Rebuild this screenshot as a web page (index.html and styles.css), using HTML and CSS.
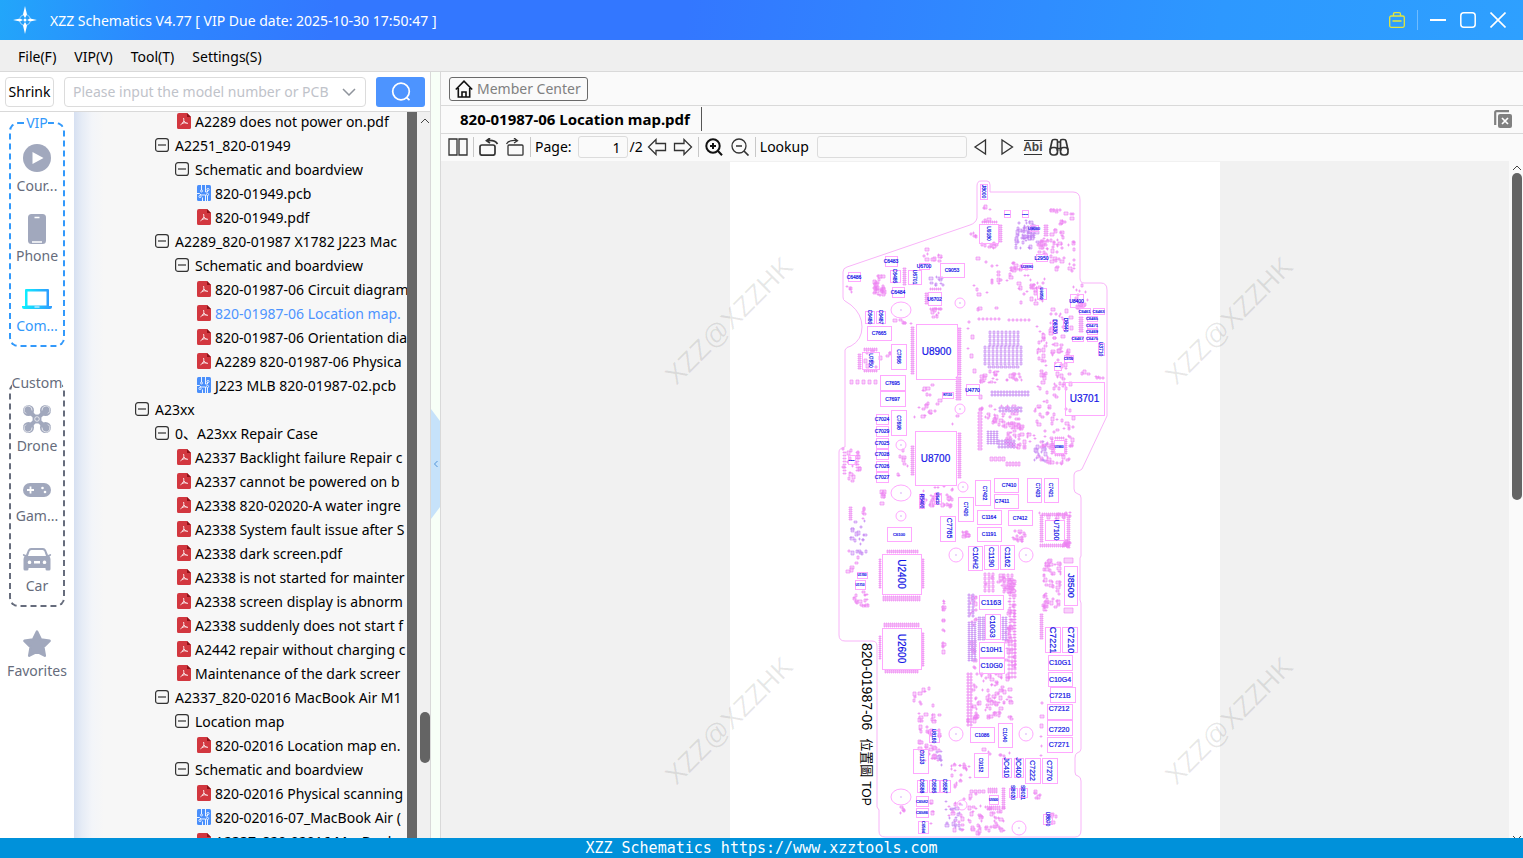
FILE: index.html
```html
<!DOCTYPE html>
<html lang="en">
<head>
    <meta charset="UTF-8">
    <meta name="viewport" content="width=device-width, initial-scale=1.0">
    <title>XZZ Schematics</title>
    <link rel="stylesheet" href="styles.css">
</head>
<body>

    <!-- Shared icons -->
    <svg class="defs" width="0" height="0">
        <symbol id="pdf" viewBox="0 0 14 16">
            <path d="M2 0h8l4 4v10.500a1.500 1.500 0 0 1-1.500 1.500h-11A1.500 1.500 0 0 1 0 14.500V2a2 2 0 0 1 2-2z" fill="#d2373f"/>
            <path d="M10 0l4 4h-4z" fill="#8e1218"/>
            <path d="M6.500 5c.8 2.500.2 4.500-3 6.800M7 8c.8 1.600 2 2.400 4 2.300M5 10.500c1.500-.7 3-.9 4.500-.6" fill="none" stroke="#fff" stroke-width=".9"/>
        </symbol>
        <symbol id="pcb" viewBox="0 0 14 16">
            <rect width="14" height="16" rx="1.500" fill="#4a8ffb"/>
            <path d="M4.500 0v5M8.500 0v7h2V5M0 8.500h2.500L4 10h4.500v6M5.500 16v-3.500M10.500 10v6" fill="none" stroke="#fff" stroke-width=".9"/>
            <g fill="#4a8ffb" stroke="#fff" stroke-width=".8"><circle cx="11" cy="4.500" r="1.100"/><circle cx="3" cy="11.500" r="1.100"/><circle cx="10.500" cy="9.500" r="1.100"/><circle cx="4.500" cy="6" r="1"/></g>
        </symbol>
        <symbol id="minus" viewBox="0 0 14 14">
            <rect x=".6" y=".6" width="12.800" height="12.800" rx="2.500" fill="none" stroke="#333" stroke-width="1.200"/>
            <path d="M3 7h8" stroke="#333" stroke-width="1.200"/>
        </symbol>
        <symbol id="up" viewBox="0 0 10 6"><path d="M1 5l4-4 4 4" fill="none" stroke="#444"/></symbol>
        <symbol id="down" viewBox="0 0 10 6"><path d="M1 1l4 4 4-4" fill="none" stroke="#444"/></symbol>
    </svg>

    <header class="titlebar">
        <svg class="logo" viewBox="0 0 26 30" width="26" height="30" fill="#fff">
            <path d="M13 1l2 8.500-2 3.500-2-3.500zM13 29l2-8.500-2-3.500-2 3.500zM1 15l7-1.500 3 1.500-3 1.500zM25 15l-7-1.500-3 1.500 3 1.500z"/>
            <circle cx="13" cy="15" r="1.500"/>
            <circle cx="13" cy="15" r="5.500" fill="none" stroke="#fff" stroke-opacity=".6" stroke-dasharray="5 3.600" stroke-dashoffset="-1.800"/>
        </svg>
        <h1>XZZ Schematics V4.77 [ VIP Due date: 2025-10-30 17:50:47 ]</h1>
        <div class="window-btns">
            <button aria-label="Toolbox">
                <svg viewBox="0 0 16 16" width="16" height="16" fill="none" stroke="#e3e63c" stroke-width="1.300"><rect x=".7" y="4" width="14.600" height="11.300" rx="1.500"/><path d="M4.500 4V2q0-1.300 1.300-1.300h4.400q1.300 0 1.300 1.300v2M3.500 9h9"/></svg>
            </button>
            <span class="divider"></span>
            <button aria-label="Minimize">
                <svg viewBox="0 0 16 16" width="16" height="16" stroke="#fff" stroke-width="2"><path d="M0 8h16"/></svg>
            </button>
            <button aria-label="Maximize">
                <svg viewBox="0 0 16 16" width="16" height="16" fill="none" stroke="#fff" stroke-width="1.500"><rect x=".8" y=".8" width="14.400" height="14.400" rx="3"/></svg>
            </button>
            <button aria-label="Close">
                <svg viewBox="0 0 16 16" width="16" height="16" stroke="#fff" stroke-width="1.600"><path d="M.5.5l15 15M15.500.5l-15 15"/></svg>
            </button>
        </div>
    </header>

    <nav class="menubar">
        <button>File(F)</button>
        <button>VIP(V)</button>
        <button>Tool(T)</button>
        <button>Settings(S)</button>
    </nav>

    <main class="main">
        <section class="left">
            <div class="search">
                <button class="shrink">Shrink</button>
                <div class="combo">
                    <input type="text" aria-label="Model number or PCB" placeholder="Please input the model number or PCB">
                    <button aria-label="History"><svg viewBox="0 0 14 8" width="14" height="8" fill="none" stroke="#8f949c" stroke-width="1.500"><path d="M1 1l6 6 6-6"/></svg></button>
                </div>
                <button class="go" aria-label="Search">
                    <svg viewBox="0 0 20 20" width="20" height="20" fill="none" stroke="#fff" stroke-width="1.700"><circle cx="10" cy="9.500" r="8.300"/><path d="M15.500 15.500l3 2.700"/></svg>
                </button>
            </div>

            <div class="browse">
                <aside class="side">
                    <fieldset class="group vip">
                        <legend>VIP</legend>
                        <button class="cat">
                            <svg viewBox="0 0 30 30"><circle cx="15" cy="15" r="14" fill="#a1a8bd"/><path d="M10.500 9v12l11-6z" fill="#fff"/></svg>
                            <span>Cour...</span>
                        </button>
                        <button class="cat">
                            <svg viewBox="0 0 30 30"><rect x="6" y="1" width="18" height="30" rx="3.500" fill="#a1a8bd"/><path d="M12.500 4.500h5M10 29h10" stroke="#fff" stroke-width="1.300"/></svg>
                            <span>Phone</span>
                        </button>
                        <button class="cat active">
                            <svg viewBox="0 0 30 30">
                                <defs><linearGradient id="lap"><stop stop-color="#0df0ff"/><stop offset="1" stop-color="#2f9bff"/></linearGradient></defs>
                                <path fill="url(#lap)" fill-rule="evenodd" d="M4 6h22q1 0 1 1v17H3V7q0-1 1-1zM5.500 8.500v14h19v-14z"/>
                                <path fill="url(#lap)" d="M0 23h30v1q0 2-2 2H2q-2 0-2-2z"/><path d="M12.500 24h5" stroke="#fff"/>
                            </svg>
                            <span>Com...</span>
                        </button>
                    </fieldset>

                    <fieldset class="group custom">
                        <legend>Custom</legend>
                        <button class="cat">
                            <svg viewBox="0 0 30 30">
                                <path d="M6.500 7.500l17 17M23.500 7.500l-17 17" stroke="#a1a8bd" stroke-width="4"/>
                                <g fill="#a1a8bd"><circle cx="6.500" cy="7.500" r="5.500"/><circle cx="23.500" cy="7.500" r="5.500"/><circle cx="6.500" cy="24.500" r="5.500"/><circle cx="23.500" cy="24.500" r="5.500"/><circle cx="15" cy="16" r="4.500"/></g>
                                <g fill="none" stroke="#fff" stroke-width=".7"><path d="M4 10.500a4 4 0 1 1 6-3M26 10.500a4 4 0 1 0-6-3M4 21.500a4 4 0 1 0 6 3M26 21.500a4 4 0 1 1-6 3"/><circle cx="15" cy="16" r="2.300"/></g>
                            </svg>
                            <span>Drone</span>
                        </button>
                        <button class="cat">
                            <svg viewBox="0 0 30 30"><rect x="1" y="10" width="28" height="14" rx="7" fill="#a1a8bd"/><path d="M5 17h7M8.500 13.500v7" stroke="#fff" stroke-width="1.800"/><circle cx="20.500" cy="15" r="1.300" fill="#fff"/><circle cx="23" cy="19" r="1.300" fill="#fff"/></svg>
                            <span>Gam...</span>
                        </button>
                        <button class="cat">
                            <svg viewBox="0 0 30 30"><path fill="#a1a8bd" fill-rule="evenodd" d="M9 5h12q2 0 3 2l2 5 2.500-1q1 0 .5 1.500l-1.500 1q1 1 1 3V26q0 1.500-1.500 1.500h-2Q23.500 27.500 23.500 26v-1h-17v1q0 1.500-1.500 1.500H3Q1.500 27.500 1.500 26v-9.500q0-2 1-3L1 12.500Q.5 11 1.500 11L4 12l2-5q1-2 3-2zM9.500 7Q8 7 7.500 8.500L6 13h18l-1.500-4.500Q22 7 20.500 7zM7.500 17.500a1.800 1.800 0 1 0 .01 0zM22.500 17.500a1.800 1.800 0 1 0 .01 0zM12 18v2.500h6V18z"/></svg>
                            <span>Car</span>
                        </button>
                    </fieldset>

                    <button class="cat fav">
                        <svg viewBox="0 0 30 30"><path d="M15 3.500l3.900 8 8.700 1.300-6.300 6.200 1.500 8.700L15 23.600l-7.800 4.100L8.700 19l-6.300-6.200 8.700-1.300z" fill="#a1a8bd" stroke="#a1a8bd" stroke-width="2.500" stroke-linejoin="round"/></svg>
                        <span>Favorites</span>
                    </button>
                </aside>

                <ul class="tree">
                    <li class="lv2"><a href="#"><svg><use href="#pdf"/></svg>A2289 does not power on.pdf</a></li>
                    <li class="lv1"><button><svg><use href="#minus"/></svg>A2251_820-01949</button></li>
                    <li class="lv2"><button><svg><use href="#minus"/></svg>Schematic and boardview</button></li>
                    <li class="lv3"><a href="#"><svg><use href="#pcb"/></svg>820-01949.pcb</a></li>
                    <li class="lv3"><a href="#"><svg><use href="#pdf"/></svg>820-01949.pdf</a></li>
                    <li class="lv1"><button><svg><use href="#minus"/></svg>A2289_820-01987 X1782 J223 Mac</button></li>
                    <li class="lv2"><button><svg><use href="#minus"/></svg>Schematic and boardview</button></li>
                    <li class="lv3"><a href="#"><svg><use href="#pdf"/></svg>820-01987-06 Circuit diagram</a></li>
                    <li class="lv3"><a href="#" class="current"><svg><use href="#pdf"/></svg>820-01987-06 Location map.</a></li>
                    <li class="lv3"><a href="#"><svg><use href="#pdf"/></svg>820-01987-06 Orientation dia</a></li>
                    <li class="lv3"><a href="#"><svg><use href="#pdf"/></svg>A2289 820-01987-06 Physica</a></li>
                    <li class="lv3"><a href="#"><svg><use href="#pcb"/></svg>J223 MLB 820-01987-02.pcb</a></li>
                    <li class="lv0"><button><svg><use href="#minus"/></svg>A23xx</button></li>
                    <li class="lv1"><button><svg><use href="#minus"/></svg>0、A23xx Repair Case</button></li>
                    <li class="lv2"><a href="#"><svg><use href="#pdf"/></svg>A2337 Backlight failure Repair c</a></li>
                    <li class="lv2"><a href="#"><svg><use href="#pdf"/></svg>A2337 cannot be powered on b</a></li>
                    <li class="lv2"><a href="#"><svg><use href="#pdf"/></svg>A2338 820-02020-A water ingre</a></li>
                    <li class="lv2"><a href="#"><svg><use href="#pdf"/></svg>A2338 System fault issue after S</a></li>
                    <li class="lv2"><a href="#"><svg><use href="#pdf"/></svg>A2338 dark screen.pdf</a></li>
                    <li class="lv2"><a href="#"><svg><use href="#pdf"/></svg>A2338 is not started for mainter</a></li>
                    <li class="lv2"><a href="#"><svg><use href="#pdf"/></svg>A2338 screen display is abnorm</a></li>
                    <li class="lv2"><a href="#"><svg><use href="#pdf"/></svg>A2338 suddenly does not start f</a></li>
                    <li class="lv2"><a href="#"><svg><use href="#pdf"/></svg>A2442 repair without charging c</a></li>
                    <li class="lv2"><a href="#"><svg><use href="#pdf"/></svg>Maintenance of the dark screer</a></li>
                    <li class="lv1"><button><svg><use href="#minus"/></svg>A2337_820-02016 MacBook Air M1</button></li>
                    <li class="lv2"><button><svg><use href="#minus"/></svg>Location map</button></li>
                    <li class="lv3"><a href="#"><svg><use href="#pdf"/></svg>820-02016 Location map en.</a></li>
                    <li class="lv2"><button><svg><use href="#minus"/></svg>Schematic and boardview</button></li>
                    <li class="lv3"><a href="#"><svg><use href="#pdf"/></svg>820-02016 Physical scanning</a></li>
                    <li class="lv3"><a href="#"><svg><use href="#pcb"/></svg>820-02016-07_MacBook Air (</a></li>
                    <li class="lv3"><a href="#"><svg><use href="#pdf"/></svg>A2337_820-02016 MacBook</a></li>
                </ul>
                <div class="edge"></div>
                <div class="scroll tree-scroll">
                    <button aria-label="Scroll up"><svg><use href="#up"/></svg></button>
                    <div class="track"><div class="thumb"></div></div>
                </div>
            </div>
        </section>

        <div class="splitter">
            <button aria-label="Collapse"><svg viewBox="0 0 6 8" width="6" height="8" fill="none" stroke="#4f93d8"><path d="M4.500 1L1.500 4l3 3"/></svg></button>
        </div>

        <section class="right">
            <div class="member-row">
                <button class="member">
                    <svg viewBox="0 0 18 18" width="18" height="18" fill="none" stroke="#111" stroke-width="1.600"><path d="M.8 9.500L9 1.200l8.200 8.300M3.300 8v9h11.400V8M7 17v-5h4v5"/></svg>
                    Member Center
                </button>
            </div>
            <div class="tabs">
                <button class="tab">820-01987-06 Location map.pdf</button>
                <button class="close-all" aria-label="Close all tabs">
                    <svg viewBox="0 0 18 18" width="18" height="18"><path d="M1.200 15V2.500q0-1.300 1.300-1.300H15" fill="none" stroke="#808080" stroke-width="2.200"/><rect x="4" y="4" width="14" height="14" rx="2" fill="#808080"/><path d="M8 8l6 6M14 8l-6 6" stroke="#fff" stroke-width="1.700"/></svg>
                </button>
            </div>
            <div class="toolbar">
                <button aria-label="Two pages"><svg viewBox="0 0 20 18"><path d="M1 1h8v16H1zM11 1h8v16h-8z"/></svg></button>
                <span class="sep"></span>
                <button aria-label="Rotate left"><svg class="thick" viewBox="0 0 20 18"><rect x="1" y="7" width="15" height="10.200" rx="2"/><path d="M18.500 6Q16 1.500 8 2.500M11 0L7.500 2.700 11 5"/></svg></button>
                <button aria-label="Rotate right"><svg viewBox="0 0 20 18"><rect x="3" y="7" width="15" height="10.200" rx="1"/><path d="M1.500 6Q4 1.500 12 2.500M9 0l3.500 2.700L9 5"/></svg></button>
                <span class="sep"></span>
                <label for="page">Page:</label>
                <input type="text" id="page" class="page-no" value="1">
                <span class="total">/2</span>
                <button aria-label="Previous page"><svg viewBox="0 0 20 18"><path d="M1.500 9L9 1.500V5.500h9.500v7H9v4z"/></svg></button>
                <button aria-label="Next page"><svg viewBox="0 0 20 18"><path d="M18.500 9L11 1.500V5.500H1.500v7H11v4z"/></svg></button>
                <span class="sep"></span>
                <button aria-label="Zoom in"><svg class="bold" viewBox="0 0 20 18"><circle cx="9" cy="8" r="6.700"/><path d="M14 13l4 4.300M6 8h6M9 5v6"/></svg></button>
                <button aria-label="Zoom out"><svg viewBox="0 0 20 18"><circle cx="9" cy="8" r="7"/><path d="M14 13l4.500 4.500M6 8h6" stroke-width="1.700"/></svg></button>
                <span class="sep"></span>
                <label for="lookup">Lookup</label>
                <input type="text" id="lookup" class="lookup">
                <button aria-label="Find previous"><svg viewBox="0 0 20 18"><path d="M14.500 2v14L4 9z"/></svg></button>
                <button aria-label="Find next"><svg viewBox="0 0 20 18"><path d="M5 2v14l10.500-7z"/></svg></button>
                <button class="abi">Abi</button>
                <button aria-label="Search in document"><svg class="thick" viewBox="0 0 20 18"><rect x="1" y="9.500" width="7.500" height="7.500" rx="3"/><rect x="11.500" y="9.500" width="7.500" height="7.500" rx="3"/><path d="M1 12L3 3q.3-1.500 2-1.500h2q1.500 0 1.500 1.500v10M19 12L17 3q-.3-1.500-2-1.500h-2q-1.500 0-1.500 1.500v10M8.500 4h3M8.500 10.500h3"/></svg></button>
            </div>
            <div class="viewer">
                <div class="canvas">
                    <div class="page">
                        <svg id="board" viewBox="730 162 490 676" width="490" height="676">
                            <path class="outline" d="M977 218V186q0-5 4-5h6q3 0 3 4v7h83q7 0 7 8v78q0 5 4 5h17q6 0 6 7V416L1082 469q-2 2-5 2-3 1-3 4v14q0 4 4 5 3 0 3 4v58l-1 2v42l1 3v146q0 3-4 4-2 1-2 5v14q0 4 3 4 3 1 3 5v49q0 7-6 7H885q-6 0-6-6v-21l-2-3V646q0-5-5-5h-27q-6 0-6-6V452q0-4 6-5v-97q1-3 6-4 11-6 11-19t-11-22l-6-4q-2-1-2-4V272q0-4 4-5L970 225q6-2 7-7z"/>
                            <text class="name" transform="translate(862 643) rotate(90)"><tspan font-size="14">820-01987-06</tspan><tspan font-size="13" dx="8">位置圖</tspan><tspan font-size="12" dx="4">TOP</tspan></text>
                        </svg>
                    </div>
                    <span class="mark m1">XZZ@XZZHK</span>
                    <span class="mark m2">XZZ@XZZHK</span>
                    <span class="mark m3">XZZ@XZZHK</span>
                    <span class="mark m4">XZZ@XZZHK</span>
                </div>
                <div class="scroll page-scroll">
                    <button aria-label="Scroll page up"><svg><use href="#up"/></svg></button>
                    <div class="track"><div class="thumb"></div></div>
                    <button aria-label="Scroll page down"><svg><use href="#down"/></svg></button>
                </div>
            </div>
        </section>
    </main>

    <footer class="footer">XZZ Schematics https://www.xzztools.com</footer>

    <script src="board.js"></script>
</body>
</html>
```
FILE: styles.css
```css
* {
    box-sizing: border-box;
}
body {
    margin: 0;
    height: 100vh;
    display: flex;
    flex-direction: column;
    overflow: hidden;
    font-family: "Noto Sans", "Noto Sans CJK SC", sans-serif;
    font-size: 14px;
    line-height: 20px;
    color: #000;
    background: #f0f0f0;
}
button, input {
    font: inherit;
    color: inherit;
}
button {
    margin: 0;
    padding: 0;
    border: none;
    background: none;
    cursor: pointer;
    white-space: nowrap;
}
a { color: inherit; text-decoration: none; }
svg { display: block; flex: none; }
.defs { position: absolute; }

/* Title bar */
.titlebar {
    flex: none;
    display: flex;
    align-items: center;
    height: 40px;
    padding: 0 17px 0 12px;
    background: linear-gradient(100deg, #22a6fa 0%, #2c88ff 10%, #3377ff 22%, #3377ff 45%, #2d98ff 80%, #2ea0ff 100%);
    color: #fff;
}
.titlebar h1 {
    flex: 1;
    margin: 0 0 0 12px;
    padding-top: 1px;
    font-size: 14px;
    font-weight: normal;
}
.window-btns { display: flex; align-items: center; gap: 14px; }
.divider { width: 1px; height: 20px; margin: 0 -2px; background: #6fbcff; }

/* Menu */
.menubar {
    flex: none;
    display: flex;
    gap: 18px;
    height: 32px;
    padding: 2px 18px 0;
    border-bottom: 1px solid #d9d9d9;
    background: #efefef;
}

.main { flex: 1; display: flex; min-height: 0; }

/* Left panel */
.left {
    flex: none;
    width: 431px;
    display: flex;
    flex-direction: column;
    border-right: 1px solid #d9d9d9;
    background: #fff;
}
.search {
    flex: none;
    display: flex;
    align-items: center;
    gap: 10px;
    height: 40px;
    padding: 0 5px;
    border-bottom: 1px solid #d9d9d9;
}
.shrink {
    width: 49px;
    height: 30px;
    padding-top: 1px;
    border: 1px solid #dcdcdc;
    border-radius: 4px;
    background: #fff;
}
.combo {
    flex: 1;
    min-width: 0;
    display: flex;
    height: 30px;
    padding: 0 9px 0 8px;
    border: 1px solid #dcdcdc;
    border-radius: 4px;
}
.combo input {
    flex: 1;
    min-width: 0;
    padding: 1px 0 0;
    border: none;
    outline: none;
    background: none;
}
.combo input::placeholder { color: #bfc3ca; }
.combo button { margin-left: 4px; }
.go {
    width: 49px;
    height: 30px;
    display: flex;
    align-items: center;
    justify-content: center;
    border-radius: 3px;
    background: #4d94ff;
}
.browse { flex: 1; display: flex; min-height: 0; }

.side {
    flex: none;
    width: 74px;
    padding: 2px 0 0;
    color: #666c7c;
}
.group {
    min-width: 0;
    margin: 0 9px 27px;
    padding: 0 0 3px;
    border: 2px dashed #666c7c;
    border-radius: 9px;
}
.group legend {
    margin: 0 auto;
    padding: 0;
    line-height: 18px;
}
.vip { border-color: #3299fb; }
.vip legend { color: #3299fb; }
.cat {
    width: 100%;
    height: 70px;
    display: flex;
    flex-direction: column;
    align-items: center;
    gap: 3px;
    padding-top: 11px;
}
.cat svg { width: 30px; height: 30px; overflow: visible; }
.cat.active { color: #3299fb; }
.fav { margin-top: -17px; }

.tree {
    flex: 1;
    min-width: 0;
    margin: 0;
    padding: 0 0 0 61px;
    list-style: none;
    overflow: hidden;
    background: linear-gradient(90deg, #d6e0f1 0, #e6ecf6 8px, #f3f5f9 18px, #f7f7f7 30px);
}
.tree li {
    height: 24px;
    overflow: hidden;
}
.tree li:first-child { margin-top: -2px; }
.tree a, .tree button {
    display: flex;
    align-items: center;
    gap: 6px;
    height: 24px;
    white-space: nowrap;
}
.tree svg { width: 14px; height: 14px; margin-bottom: 2px; }
.tree a { padding-left: 2px; gap: 4px; }
.tree a svg { height: 16px; }
.tree .current { color: #4d94ff; }
.lv1 { padding-left: 20px; }
.lv2 { padding-left: 40px; }
.lv3 { padding-left: 60px; }
.edge { flex: none; width: 10px; background: #676767; }

.scroll {
    flex: none;
    width: 13px;
    display: flex;
    flex-direction: column;
    align-items: center;
    background: #f0f0f0;
}
.scroll button { height: 12px; }
.scroll svg { width: 10px; height: 6px; margin: 3px auto; }
.track { flex: 1; width: 10px; }
.thumb { border-radius: 5px; background: #646464; }
.tree-scroll { padding: 3px 0 0 2px; }
.tree-scroll .thumb { height: 51px; margin-top: 585px; }

/* Splitter with its collapse handle */
.splitter {
    flex: none;
    width: 9px;
    display: flex;
    align-items: center;
    background: #f7fff7;
}
.splitter button {
    width: 9px;
    height: 110px;
    margin-top: 18px;
    display: flex;
    align-items: center;
    justify-content: center;
    background: #c6e2fa;
    clip-path: polygon(0 0, 100% 12px, 100% 98px, 0 100%);
}

/* Right panel */
.right {
    flex: 1;
    min-width: 0;
    display: flex;
    flex-direction: column;
    border-left: 1px solid #d9d9d9;
    background: #fafafa;
}
.member-row {
    flex: none;
    display: flex;
    align-items: center;
    height: 34px;
    padding: 0 8px;
    border-bottom: 1px solid #d9d9d9;
}
.member {
    display: flex;
    align-items: center;
    gap: 4px;
    height: 24px;
    padding: 0 6px 0 5px;
    border: 1px solid #6a6a6a;
    border-radius: 3px;
    color: #808080;
}
.tabs {
    flex: none;
    display: flex;
    align-items: center;
    justify-content: space-between;
    height: 28px;
    padding: 0 11px 1px 0;
    border-bottom: 1px solid #d9d9d9;
}
.tab {
    height: 24px;
    padding: 0 11px 0 19px;
    border-right: 1px solid #555;
    font-size: 15px;
    font-weight: bold;
}
.toolbar {
    flex: none;
    display: flex;
    align-items: center;
    height: 27px;
    padding: 0 0 1px 4px;
}
.toolbar button {
    width: 26px;
    height: 24px;
    display: flex;
    align-items: center;
    justify-content: center;
}
.toolbar svg {
    width: 20px;
    height: 18px;
    fill: none;
    stroke: #333;
    stroke-width: 1.3;
}
.toolbar svg.thick { stroke-width: 1.7; }
.toolbar svg.bold { stroke: #111; stroke-width: 2; }
.sep {
    width: 1px;
    height: 20px;
    margin: 0 2px;
    background: #c8c8c8;
}
.toolbar label { padding: 0 6px 0 2px; }
.toolbar input {
    height: 22px;
    padding: 0 6px;
    border: 1px solid #dcdcdc;
    border-radius: 3px;
    background: #fafafa;
    outline: none;
}
.toolbar .page-no { width: 50px; text-align: right; }
.toolbar .lookup { width: 150px; margin: 0 1px 0 2px; }
.total { padding: 0 1px 0 2px; }
.toolbar .abi {
    width: 18px;
    height: 15px;
    margin: 0 4px;
    border: solid #333;
    border-width: 1px 0;
    color: #444;
    font: bold 12px "Liberation Sans", Arial, sans-serif;
}

.viewer { flex: 1; display: flex; min-height: 0; }
.canvas {
    position: relative;
    flex: 1;
    display: flex;
    justify-content: center;
    overflow: hidden;
    background: #f1f1f1;
}
.page { margin-top: 1px; background: #fff; }
.mark {
    position: absolute;
    width: 180px;
    margin: -20px 0 0 -90px;
    line-height: 40px;
    text-align: center;
    white-space: nowrap;
    font-family: "Liberation Sans", Arial, sans-serif;
    font-size: 27px;
    color: rgba(0, 0, 0, 0.09);
    transform: rotate(-45deg);
    pointer-events: none;
}
/* The watermark repeats on a 500 x 400 grid */
.m1, .m3 { left: calc(50% - 246px); }
.m2, .m4 { left: calc(50% + 254px); }
.m1, .m2 { top: 160px; }
.m3, .m4 { top: 560px; }
.page-scroll { width: 14px; padding-left: 1px; background: #fafafa; }
.page-scroll .thumb { height: 327px; }
.page-scroll button:first-child { padding-top: 1px; }
.page-scroll button:last-child { height: 6px; }

/* Board drawing */
.outline, .part { fill: none; stroke: #ffa8ff; stroke-width: 1; }
rect.part { shape-rendering: crispEdges; }
.outline { stroke: #f9b4f9; }
.pads { fill: #f9d2fb; stroke: #ec80f1; stroke-width: 0.6; }
.dense { fill: #ecd0fa; stroke: #b878f2; stroke-width: 0.5; }
.lbl {
    fill: #1414e6;
    stroke: #1414e6;
    stroke-width: 0.2;
    font-family: "Liberation Sans", Arial, sans-serif;
    text-anchor: middle;
    dominant-baseline: central;
}
.name { font-family: "Liberation Sans", "Noto Sans CJK TC", sans-serif; }

.footer {
    flex: none;
    height: 20px;
    background: #0091da;
    color: #fff;
    text-align: center;
    font-family: "DejaVu Sans Mono", monospace;
    font-size: 15px;
}
```
FILE: board.js
```js
const NS = "http://www.w3.org/2000/svg";
const board = document.getElementById("board");

// x, y, width, height, label, font size, vertical, label x, label y
const parts = [
    [916, 324, 41, 55, "U8900", 10], [915, 431, 41, 54, "U8700", 10], [1065, 382, 39, 33, "U3701", 10],
    [882, 554, 39, 40, "U2400", 10, 1], [882, 628, 39, 41, "U2600", 10, 1], [1064, 566, 13, 39, "J8500", 9, 1],
    [979, 224, 19, 19, "U9180", 5, 1], [940, 263, 24, 14, "C9053", 5], [885, 256, 12, 10, "C6483", 5],
    [848, 272, 12, 9, "C6486", 5], [890, 270, 10, 12, "C6485", 5, 1], [908, 270, 13, 14, "U6701", 5, 1],
    [919, 263, 10, 6, "U6700", 5], [892, 287, 12, 10, "C6484", 5], [928, 292, 13, 13, "U6702", 5],
    [865, 311, 9, 12, "C6480", 5, 1], [876, 311, 9, 12, "C6487", 5, 1], [867, 326, 24, 14, "C7665", 5],
    [891, 344, 15, 25, "C7666", 5, 1], [862, 352, 17, 17, "U7650", 5, 1], [880, 375, 25, 15, "C7695", 5],
    [880, 391, 25, 15, "C7697", 5], [966, 384, 13, 11, "U4770", 5], [1036, 254, 11, 7, "L2950", 5],
    [1022, 263, 10, 6, "U2890", 4], [1070, 294, 13, 13, "U8400", 5], [1037, 288, 9, 11, "U8050", 4, 1],
    [1079, 308, 11, 6, "C6461", 4], [1093, 308, 11, 6, "C6463", 4], [1087, 316, 10, 5, "C6465", 4],
    [1087, 323, 10, 5, "C6471", 4], [1087, 329, 10, 5, "C6469", 4], [1087, 336, 10, 5, "C6475", 4],
    [1072, 336, 11, 5, "C6467", 4], [1098, 343, 6, 12, "U3710", 5, 1], [980, 184, 7, 15, "J8000", 5, 1],
    [1030, 225, 8, 6, "U9080", 4], [1052, 320, 5, 13, "D8330", 5, 1], [1063, 320, 5, 10, "D8440", 5, 1],
    [876, 414, 12, 10, "C7024", 5], [876, 426, 12, 10, "C7029", 5], [876, 438, 12, 10, "C7025", 5],
    [876, 449, 12, 10, "C7028", 5], [876, 461, 12, 10, "C7026", 5], [876, 472, 12, 10, "C7027", 5],
    [891, 410, 15, 25, "C7698", 5, 1], [994, 478, 24, 14, "C7410", 5, 0, 1009, 485], [994, 494, 24, 14, "C7411", 5, 0, 1002, 501],
    [975, 480, 15, 25, "C7422", 5, 1, 985, 493], [958, 497, 15, 24, "C7420", 5, 1], [1027, 478, 14, 24, "C7423", 5, 1, 1038, 490],
    [1044, 478, 14, 24, "C7421", 5, 1], [940, 516, 15, 25, "C7765", 7, 1, 949, 528], [977, 510, 24, 14, "C1164", 5],
    [977, 527, 24, 14, "C1191", 5], [1008, 510, 24, 15, "C7412", 5, 0], [887, 527, 24, 14, "C6100", 4],
    [1045, 520, 19, 20, "U7100", 7, 1, 1056, 530], [968, 546, 14, 24, "C10H2", 7, 1], [984, 545, 14, 24, "C1190", 7, 1],
    [1000, 545, 14, 24, "C1162", 7, 1], [979, 595, 24, 14, "C1163", 7], [985, 614, 15, 25, "C10G3", 7, 1],
    [979, 642, 25, 15, "C10H1", 7], [979, 658, 25, 15, "C10G0", 7], [1045, 627, 15, 25, "C7221", 9, 1, 1053, 640],
    [1062, 627, 15, 25, "C7210", 9, 1, 1071, 640], [1048, 655, 24, 15, "C10G1", 7], [1048, 672, 24, 14, "C10G4", 7],
    [1050, 687, 25, 15, "C721B", 7, 0, 1060, 695], [1047, 704, 25, 15, "C7212", 7, 0, 1059, 708],
    [1047, 720, 25, 15, "C7220", 7, 0, 1059, 729], [1047, 737, 25, 15, "C7271", 7, 0, 1059, 744],
    [970, 727, 24, 15, "C1086", 5], [998, 723, 14, 24, "C1040", 5, 1], [1002, 758, 9, 19, "JC410", 7, 1],
    [1014, 758, 9, 19, "JC400", 7, 1], [1025, 758, 15, 25, "C7222", 7, 1], [1042, 758, 15, 25, "C7270", 7, 1],
    [974, 753, 14, 24, "C9152", 5, 1], [913, 749, 15, 24, "C9133", 5, 1, 922, 757], [917, 780, 10, 12, "C6588", 5, 1],
    [929, 780, 10, 12, "C6585", 5, 1], [940, 780, 10, 12, "C6587", 5, 1], [916, 796, 12, 10, "C6582", 4],
    [916, 808, 12, 9, "C6586", 4], [918, 821, 10, 12, "C6584", 4, 1], [989, 795, 9, 9, "U5500", 3],
    [1009, 788, 8, 9, "SB020", 5, 1], [1019, 788, 8, 9, "SB021", 5, 1], [1043, 814, 9, 10, "U8870", 5, 1],
    [929, 730, 10, 12, "U8160", 5, 1], [919, 494, 5, 14, "R5400", 5, 1], [934, 493, 7, 11, "U5410", 4, 1],
    [1054, 440, 10, 13, "U3900", 3, 0], [848, 455, 7, 9, "U4500", 2], [857, 572, 10, 6, "U1700", 3],
    [855, 580, 10, 9, "U1710", 3], [1004, 210, 6, 7, "C9011", 2], [1022, 210, 6, 7, "C9012", 2],
    [942, 392, 11, 6, "R7110", 3], [1064, 355, 9, 7, "C3720", 3], [1054, 362, 7, 8, "C3722", 2]
];

// cx, cy, rx, ry
const holes = [
    [960, 303, 5, 5], [901, 310, 10, 8], [901, 445, 5, 5], [901, 493, 10, 8], [901, 516, 5, 5],
    [960, 409, 5, 5], [963, 487, 5, 5], [956, 555, 7, 7], [1026, 555, 7, 7], [956, 734, 7, 7],
    [1026, 734, 7, 7], [901, 797, 10, 8], [962, 805, 5, 5], [1019, 828, 7, 7]
];

// rows of pins: x, y, columns, rows, step x, step y, pad width, pad height
const pins = [
    [911, 327, 1, 24, 0, 2, 3, 1], [958, 328, 1, 24, 0, 2, 3, 1], [911, 446, 1, 15, 0, 2, 3, 1],
    [958, 433, 1, 23, 0, 2, 3, 1], [879, 559, 1, 15, 0, 2, 2, 1], [922, 559, 1, 15, 0, 2, 2, 1],
    [887, 550, 16, 1, 2, 0, 1, 3], [883, 596, 19, 1, 2, 0, 1, 5], [884, 623, 18, 1, 2, 0, 1, 4],
    [885, 670, 17, 1, 2, 0, 1, 3], [879, 636, 1, 12, 0, 2, 2, 1], [922, 633, 1, 17, 0, 2, 2, 1],
    [999, 225, 1, 9, 0, 2, 3, 1], [982, 221, 8, 1, 2, 0, 1, 2], [903, 268, 1, 9, 0, 2, 3, 1],
    [925, 293, 1, 6, 0, 2, 3, 1], [930, 288, 6, 1, 2, 0, 1, 2], [930, 308, 6, 1, 2, 0, 1, 2],
    [858, 354, 1, 8, 0, 2, 3, 1], [864, 348, 7, 1, 2, 0, 1, 3], [864, 370, 7, 1, 2, 0, 1, 2],
    [956, 377, 1, 12, 0, 2, 5, 1], [1040, 515, 1, 14, 0, 2, 3, 1], [1067, 515, 1, 17, 0, 2, 3, 1],
    [1042, 513, 13, 1, 2, 0, 1, 3], [1040, 544, 15, 1, 2, 0, 1, 3], [1051, 439, 1, 8, 0, 2, 2, 1],
    [1065, 439, 1, 8, 0, 2, 2, 1], [1055, 437, 5, 1, 2, 0, 1, 2], [1055, 454, 5, 1, 2, 0, 1, 2],
    [978, 412, 1, 13, 0, 3, 4, 2], [978, 318, 6, 1, 4, 0, 2, 2], [1008, 319, 6, 1, 4, 0, 2, 2],
    [850, 380, 5, 1, 6, 0, 3, 4], [1064, 558, 1, 2, 0, 50, 9, 5],
    [843, 452, 1, 8, 0, 3, 3, 1], [856, 452, 1, 7, 0, 3, 3, 1], [849, 507, 1, 7, 0, 2, 3, 1],
    [1044, 225, 1, 6, 0, 2, 4, 1], [988, 788, 5, 1, 2, 0, 1, 5], [987, 806, 7, 1, 2, 0, 1, 4],
    [1002, 788, 1, 11, 0, 2, 3, 1], [1006, 462, 5, 1, 3, 0, 2, 4], [990, 457, 4, 1, 4, 0, 3, 4],
    [1040, 614, 1, 13, 0, 2, 3, 1], [970, 790, 4, 1, 4, 0, 3, 3], [1050, 209, 4, 1, 3, 0, 2, 2],
    [1079, 317, 1, 8, 0, 2, 4, 1], [1096, 377, 3, 1, 3, 0, 2, 2]
];

// finer grids drawn in the stronger tone
const grids = [
    [989, 331, 8, 4, 4, 4, 2, 3], [984, 346, 10, 5, 4, 4, 2, 3], [988, 366, 8, 1, 4, 4, 3, 2],
    [991, 391, 13, 2, 3, 3, 2, 2], [987, 431, 4, 7, 3, 2, 2, 1], [998, 440, 6, 3, 3, 3, 2, 2],
    [999, 407, 8, 2, 3, 3, 2, 2], [1027, 231, 3, 4, 3, 2, 2, 1], [968, 594, 2, 8, 4, 3, 2, 2],
    [978, 617, 2, 12, 4, 2, 3, 1], [1002, 617, 2, 12, 3, 2, 2, 1], [968, 622, 3, 20, 3, 2, 2, 1]
];

const lines = [
    [967, 673, 2, 18, 3, 3, 2, 2], [1009, 580, 2, 20, 4, 3, 2, 1], [1008, 640, 3, 10, 3, 4, 2, 2],
    [1014, 610, 1, 20, 3, 3, 2, 1], [984, 573, 3, 5, 4, 4, 2, 3], [1003, 574, 3, 5, 4, 4, 2, 3]
];

// loose parts: x, y, width, height, count, dense
const areas = [
    [1015, 220, 26, 30, 50, 1], [1036, 238, 14, 18, 20, 0], [1050, 208, 26, 66, 50, 0], [982, 205, 10, 18, 5, 0],
    [970, 231, 8, 8, 5, 0], [980, 242, 20, 8, 9, 0], [990, 265, 40, 26, 22, 0], [1010, 262, 14, 10, 10, 0],
    [922, 247, 22, 16, 10, 0], [927, 276, 18, 11, 10, 1], [873, 275, 14, 22, 30, 0], [864, 350, 28, 20, 10, 0],
    [845, 284, 8, 10, 5, 0], [893, 318, 20, 8, 6, 0], [930, 308, 14, 12, 8, 0], [1030, 275, 18, 30, 12, 0],
    [1048, 308, 26, 34, 20, 0], [1073, 284, 16, 26, 16, 0], [1037, 330, 12, 75, 30, 0], [1050, 343, 24, 56, 38, 0],
    [980, 370, 20, 14, 18, 0], [1004, 370, 20, 12, 12, 0], [985, 405, 36, 26, 40, 0], [1004, 422, 28, 28, 45, 0],
    [1032, 405, 24, 60, 30, 0], [1056, 408, 20, 26, 10, 0], [1034, 440, 14, 24, 16, 1], [1060, 455, 14, 14, 6, 0],
    [1068, 435, 8, 14, 6, 0], [910, 382, 34, 44, 14, 0], [895, 448, 14, 30, 8, 0], [848, 472, 10, 16, 5, 0],
    [842, 448, 20, 24, 12, 0], [850, 520, 18, 36, 22, 1], [862, 507, 5, 14, 5, 0], [852, 590, 18, 18, 18, 0],
    [920, 486, 34, 24, 38, 0], [880, 488, 8, 20, 7, 0], [962, 531, 10, 9, 8, 0], [1010, 529, 20, 14, 16, 0],
    [1036, 512, 36, 8, 10, 0], [1060, 540, 12, 8, 10, 0], [1042, 557, 20, 52, 50, 0], [983, 572, 30, 20, 14, 0],
    [970, 595, 8, 76, 26, 0], [1005, 580, 12, 92, 45, 0], [972, 673, 42, 48, 80, 0], [967, 715, 16, 10, 8, 0],
    [942, 567, 4, 104, 16, 0], [913, 680, 22, 28, 10, 0], [918, 713, 24, 50, 45, 0], [935, 750, 8, 18, 8, 1],
    [950, 763, 22, 26, 22, 0], [945, 798, 18, 36, 18, 1], [948, 798, 20, 36, 16, 0], [968, 790, 16, 46, 24, 0],
    [984, 806, 22, 28, 26, 0], [1034, 790, 8, 12, 5, 0], [1036, 812, 22, 14, 7, 0], [900, 805, 6, 10, 5, 0],
    [930, 800, 6, 34, 5, 0], [970, 748, 56, 10, 7, 0], [1040, 690, 4, 90, 6, 0], [970, 255, 30, 60, 10, 0],
    [1040, 410, 20, 60, 14, 0], [974, 395, 10, 18, 5, 0], [1042, 600, 14, 12, 6, 0], [846, 550, 20, 24, 6, 0],
    [1020, 275, 30, 60, 12, 0], [1074, 370, 30, 10, 5, 0], [965, 318, 18, 60, 6, 0], [910, 392, 50, 34, 8, 0]
];

function add(tag, attrs) {
    const el = document.createElementNS(NS, tag);
    for (const key in attrs) el.setAttribute(key, attrs[key]);
    board.appendChild(el);
    return el;
}

// fixed seed, so the board is the same on every load
let seed = 4177;
function rnd() {
    seed = (seed * 16807) % 2147483647;
    return seed / 2147483647;
}

function rect(x, y, w, h) {
    return `M${x} ${y}h${w}v${h}h${-w}z`;
}

function gridPath(list) {
    let d = "";
    for (const [x, y, cols, rows, dx, dy, w, h] of list) {
        for (let c = 0; c < cols; c++) {
            for (let r = 0; r < rows; r++) d += rect(x + c * dx, y + r * dy, w, h);
        }
    }
    return d;
}

const sizes = [[1, 2], [2, 1], [2, 3], [3, 2], [2, 2], [4, 3], [3, 4]];

function areaPath(dense) {
    let d = "";
    for (const [x, y, w, h, count, tone] of areas) {
        if (tone !== dense) continue;
        for (let i = 0; i < count; i++) {
            const [pw, ph] = sizes[Math.floor(rnd() * sizes.length)];
            d += rect(x + Math.floor(rnd() * (w - pw)), y + Math.floor(rnd() * (h - ph)), pw, ph);
        }
    }
    return d;
}

add("path", { class: "pads", d: gridPath(pins) + gridPath(lines) + areaPath(0) });
add("path", { class: "dense", d: gridPath(grids) + areaPath(1) });

for (const [cx, cy, rx, ry] of holes) {
    add("ellipse", { class: "part", cx, cy, rx, ry });
    add("circle", { class: "dense", cx, cy, r: 0.4 });
}

for (const [x, y, width, height, label, size, vertical, lx, ly] of parts) {
    add("rect", { class: "part", x, y, width, height });
    const cx = lx || x + width / 2;
    const cy = ly || y + height / 2;
    const text = add("text", {
        class: "lbl",
        "font-size": size,
        transform: `translate(${cx} ${cy})` + (vertical ? " rotate(90)" : "")
    });
    text.textContent = label;
}
```
